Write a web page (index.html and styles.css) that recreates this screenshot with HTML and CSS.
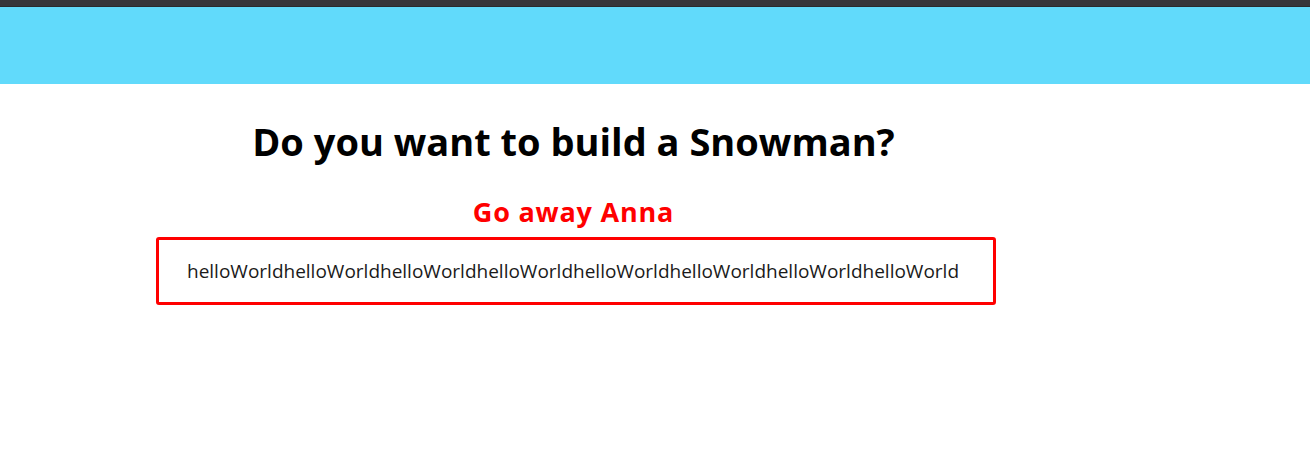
FILE: index.html
```html
<!DOCTYPE html>
<html lang="en">
  <head>
    <meta charset="UTF-8" />
    <meta name="viewport" content="width=device-width, initial-scale=1.0" />
    <title>Snowman</title>
    <link rel="stylesheet" href="styles.css">
  </head>
  <body>
    <div class="topbar"></div>
    <header class="header"></header>
    <main class="main">
      <h1 class="title">Do you want to build a Snowman?</h1>
      <h2 class="reply">Go away Anna</h2>
      <div class="box">helloWorldhelloWorldhelloWorldhelloWorldhelloWorldhelloWorldhelloWorldhelloWorld</div>
    </main>
  </body>
</html>
```

FILE: styles.css
```css
body {
  margin: 0;
  font-family: "Open Sans", "Noto Sans", sans-serif;
  background: #fff;
  color: #000;
}
.topbar {
  height: 6px;
  background-color: #36363b;
  border-bottom: 1px solid #2a2a2e;
}
.header {
  height: 77px;
  background-color: #61dafb;
}
.main {
  width: 1147px;
  display: flex;
  flex-direction: column;
  align-items: center;
}
.title {
  margin: 31px 0 0;
  font-size: 38px;
  font-weight: 700;
  line-height: 52px;
}
.reply {
  margin: 29px 0 0;
  font-size: 27px;
  font-weight: 700;
  letter-spacing: 0.8px;
  color: #ff0000;
  line-height: 32px;
}
.box {
  margin-top: 9px;
  margin-left: 5px;
  box-sizing: border-box;
  width: 840px;
  height: 68px;
  border: 3px solid #ff0000;
  border-radius: 3px;
  padding: 0 28px;
  display: flex;
  align-items: center;
  font-size: 19px;
  color: #1a1a1a;
}
```
